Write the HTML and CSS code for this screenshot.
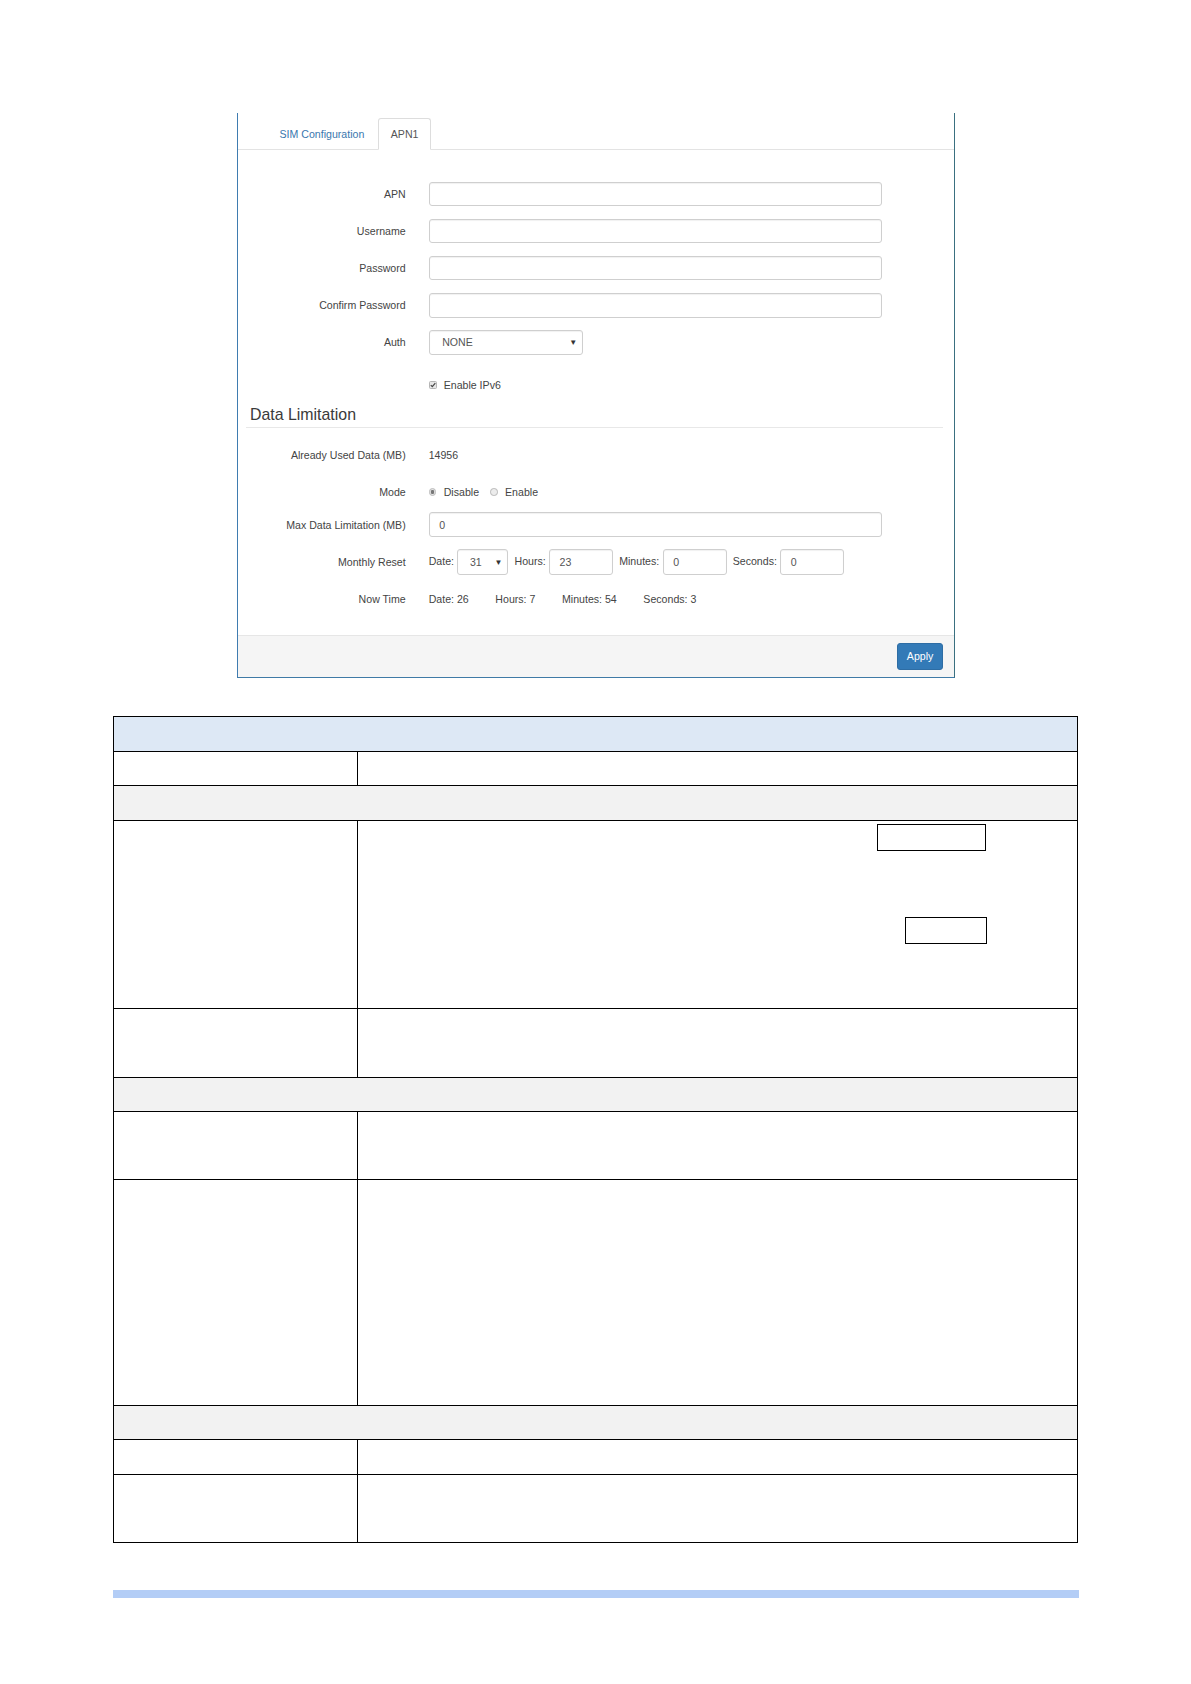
FILE: index.html
```html
<!DOCTYPE html>
<html lang="en">
<head>
<meta charset="utf-8">
<title>APN1 Configuration</title>
<link rel="stylesheet" href="styles.css">
</head>
<body>
<div class="page">
  <div class="panel">
    <ul class="tabs">
      <li class="tab">SIM Configuration</li>
      <li class="tab active">APN1</li>
    </ul>
    <div class="pbody">
      <div class="frow r-first"><div class="lbl">APN</div><div class="input wide"></div></div>
      <div class="frow r-std"><div class="lbl">Username</div><div class="input wide"></div></div>
      <div class="frow r-std"><div class="lbl">Password</div><div class="input wide"></div></div>
      <div class="frow r-std"><div class="lbl">Confirm Password</div><div class="input wide"></div></div>
      <div class="frow r-std"><div class="lbl">Auth</div><div class="input select auth"><span class="val">NONE</span><span class="arrow">&#9660;</span></div></div>
      <div class="frow r-cb"><div class="lbl"></div>
        <span class="check"><svg width="8" height="8" viewBox="0 0 8 8"><rect x="0.5" y="0.5" width="7" height="7" rx="1" fill="#e6e6e6" stroke="#b5b5b5"/><path d="M1.8 4.1 L3.3 5.6 L6.3 2.2" fill="none" stroke="#444" stroke-width="1.2"/></svg></span>
        <span class="cbtext">Enable IPv6</span>
      </div>
      <h3 class="section">Data Limitation</h3>
      <div class="frow r-used"><div class="lbl">Already Used Data (MB)</div><span class="plain">14956</span></div>
      <div class="frow r-mode"><div class="lbl">Mode</div>
        <span class="radio on"></span><span class="rtext">Disable</span>
        <span class="radio"></span><span class="rtext">Enable</span>
      </div>
      <div class="frow r-max"><div class="lbl">Max Data Limitation (MB)</div><div class="input wide"><span class="val">0</span></div></div>
      <div class="frow r-reset"><div class="lbl">Monthly Reset</div>
        <span class="ilbl">Date:</span>
        <div class="input select date"><span class="val">31</span><span class="arrow">&#9660;</span></div>
        <span class="ilbl">Hours:</span>
        <div class="input small"><span class="val">23</span></div>
        <span class="ilbl">Minutes:</span>
        <div class="input small"><span class="val">0</span></div>
        <span class="ilbl">Seconds:</span>
        <div class="input small"><span class="val">0</span></div>
      </div>
      <div class="frow r-now"><div class="lbl">Now Time</div>
        <span class="now">Date: 26</span>
        <span class="now">Hours: 7</span>
        <span class="now">Minutes: 54</span>
        <span class="now">Seconds: 3</span>
      </div>
    </div>
    <div class="footer"><button class="btn" type="button">Apply</button></div>
  </div>

  <div class="spec">
    <div class="trow head h35"></div>
    <div class="trow h34"><div class="c1"></div><div class="c2"></div></div>
    <div class="trow sect h35"></div>
    <div class="trow h188"><div class="c1"></div><div class="c2 boxes"><div class="box box1"></div><div class="box box2"></div></div></div>
    <div class="trow h69"><div class="c1"></div><div class="c2"></div></div>
    <div class="trow sect h34"></div>
    <div class="trow h68"><div class="c1"></div><div class="c2"></div></div>
    <div class="trow h226"><div class="c1"></div><div class="c2"></div></div>
    <div class="trow sect h34"></div>
    <div class="trow h35"><div class="c1"></div><div class="c2"></div></div>
    <div class="trow h68 last"><div class="c1"></div><div class="c2"></div></div>
  </div>
  <div class="bar"></div>
</div>
</body>
</html>
```

FILE: styles.css
```css
html, body {
  margin: 0;
  padding: 0;
  background: #ffffff;
}
body {
  font-family: "Liberation Sans", Arial, sans-serif;
  font-size: 10.6px;
  color: #444;
}
.page {
  width: 1191px;
  min-height: 1684px;
  padding-top: 113px;
  box-sizing: border-box;
}

/* ---------- panel ---------- */
.panel {
  margin-left: 237px;
  width: 718px;
  box-sizing: border-box;
  border-left: 1px solid #3f7cb0;
  border-right: 1px solid #3a7080;
  border-bottom: 1px solid #3f7aa6;
}
.tabs {
  list-style: none;
  margin: 0;
  padding: 5px 0 0 29.5px;
  height: 37px;
  box-sizing: border-box;
  display: flex;
  border-bottom: 1px solid #e3e3e3;
}
.tab {
  height: 32px;
  box-sizing: border-box;
  padding: 0 11px;
  margin-right: 2px;
  display: flex;
  align-items: center;
  color: #3a77ae;
  border: 1px solid transparent;
  border-radius: 3px 3px 0 0;
}
.tab.active {
  color: #555;
  background: #fff;
  border-color: #dddddd;
  border-bottom-color: #fff;
  padding: 0 11.5px;
}

.frow {
  display: flex;
  align-items: center;
  height: 24.6px;
}
.r-first { margin-top: 31.7px; }
.r-std { margin-top: 12.5px; }
.r-cb { margin-top: 18px; }
.r-used { margin-top: 15px; }
.r-mode { margin-top: 12.7px; }
.r-max { margin-top: 7.7px; }
.r-reset { margin-top: 12.4px; height: 25.7px; }
.r-now { margin-top: 11.8px; }

.lbl {
  flex: none;
  width: 167.7px;
  margin-right: 23px;
  text-align: right;
  color: #444;
}
.input {
  flex: none;
  box-sizing: border-box;
  height: 100%;
  border: 1px solid #cfcfcf;
  border-radius: 3px;
  background: #fff;
  box-shadow: inset 0 1px 1px rgba(0, 0, 0, 0.06);
  display: flex;
  align-items: center;
  padding: 0 9.5px;
  color: #555;
}
.input.wide { width: 453.6px; }
.input.select {
  justify-content: space-between;
  padding: 0 5px 0 12.5px;
}
.input.auth { width: 154.6px; }
.input.date { width: 51px; padding-left: 11.5px; }
.input.small { width: 64px; }
.arrow {
  font-size: 8px;
  color: #333;
}

.check {
  display: inline-flex;
  width: 8px;
  height: 8px;
  margin-right: 7px;
}
.check svg { display: block; }
.cbtext { color: #444; }

.section {
  margin: 9.1px 11px 0 8px;
  padding: 0 0 2.8px 4px;
  font-size: 15.9px;
  line-height: 17.5px;
  font-weight: normal;
  color: #3a3a3a;
  border-bottom: 1px solid #e8e8e8;
}

.plain { color: #444; }

.radio {
  flex: none;
  width: 7.5px;
  height: 7.5px;
  box-sizing: border-box;
  border-radius: 50%;
  border: 1px solid #b8b8b8;
  background: #ececec;
  margin-right: 7.5px;
}
.radio.on {
  background: radial-gradient(circle, #777 0 1.7px, #e4e4e4 2.1px);
}
.rtext { margin-right: 11px; color: #444; }

.ilbl {
  margin: -2px 3.4px 0 0;
  color: #444;
}
.input + .ilbl { margin-left: 6.1px; }

.now { margin-right: 26.6px; color: #444; }

.footer {
  margin-top: 24px;
  border-top: 1px solid #e6e6e6;
  background: #f5f5f5;
  height: 41.7px;
  box-sizing: border-box;
  display: flex;
  justify-content: flex-end;
  align-items: flex-start;
  padding: 7px 10.6px 0 0;
}
.btn {
  width: 46.7px;
  height: 26.4px;
  border: 1px solid #2e6da4;
  border-radius: 3px;
  background: #337ab7;
  color: #fff;
  font-family: "Liberation Sans", Arial, sans-serif;
  font-size: 10.6px;
  padding: 0;
}

/* ---------- spec table ---------- */
.spec {
  margin-top: 38px;
  margin-left: 113px;
  width: 965px;
  box-sizing: border-box;
  border: 1px solid #000;
  border-bottom: none;
}
.trow {
  display: flex;
  box-sizing: border-box;
  border-bottom: 1px solid #000;
}
.trow.head { background: #dde8f5; }
.trow.sect { background: #f2f2f2; }
.c1 {
  flex: none;
  width: 243px;
  border-right: 1px solid #000;
}
.c2 { flex: 1; }
.h34 { height: 34px; }
.h35 { height: 35px; }
.h68 { height: 68px; }
.h69 { height: 69px; }
.h188 { height: 188px; }
.h226 { height: 226px; }

.boxes {
  display: flex;
  flex-direction: column;
  padding-top: 3.3px;
}
.box {
  box-sizing: border-box;
  border: 1px solid #000;
}
.box1 {
  width: 109px;
  height: 26.4px;
  margin-left: 519px;
}
.box2 {
  width: 82px;
  height: 27px;
  margin-left: 547px;
  margin-top: 66.6px;
}

.bar {
  margin-top: 47px;
  margin-left: 113px;
  width: 966px;
  height: 8px;
  background: #b3cdf6;
}
```
